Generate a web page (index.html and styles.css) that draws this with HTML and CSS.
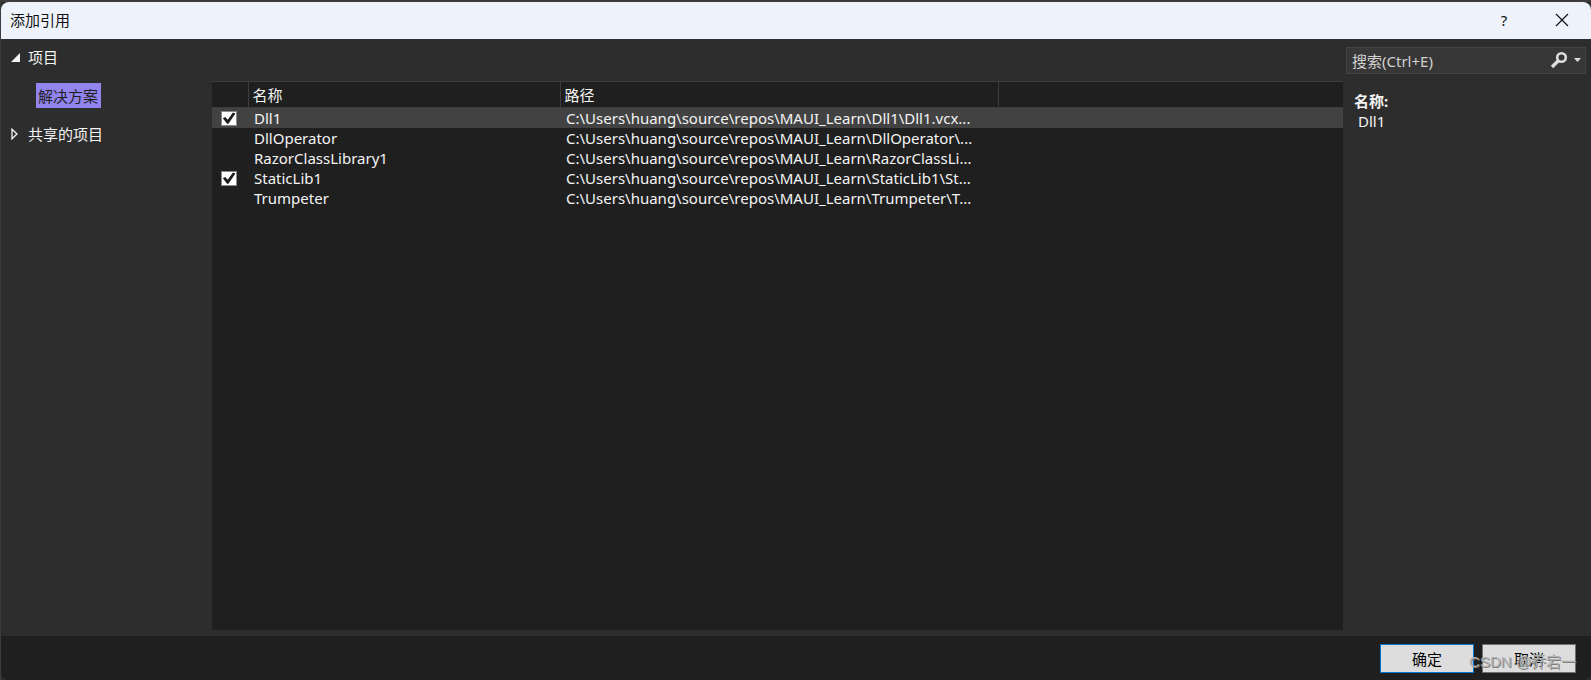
FILE: index.html
```html
<!DOCTYPE html>
<html lang="zh-CN">
<head>
<meta charset="utf-8">
<title>添加引用</title>
<link rel="stylesheet" href="styles.css">
</head>
<body>
<div class="dialog" role="dialog" aria-labelledby="dialog-title">
  <header class="titlebar">
    <h1 class="title" id="dialog-title">添加引用</h1>
    <button class="caption-button" type="button">?</button>
    <button class="caption-button" type="button" aria-label="关闭">
      <svg width="14" height="14" viewBox="0 0 14 14"><path d="M1 1l12 12M13 1L1 13" stroke="#111" stroke-width="1.2" fill="none"/></svg>
    </button>
  </header>
  <main class="content">
    <nav class="sidebar">
      <button class="group" type="button" aria-expanded="true">
        <svg class="arrow" width="10" height="10" viewBox="0 0 10 10"><path d="M10 1v9H1z" fill="#f4f4f4"/></svg>项目
      </button>
      <button class="entry" type="button">解决方案</button>
      <button class="group" type="button" aria-expanded="false">
        <svg class="arrow" width="10" height="12" viewBox="0 0 10 12"><path d="M2 1.200v9.600L7 6z" stroke="#f4f4f4" stroke-width="1.3" fill="none"/></svg>共享的项目
      </button>
    </nav>
    <section class="list">
      <table class="refs">
        <colgroup><col class="col-check"><col class="col-name"><col class="col-path"><col></colgroup>
        <thead>
          <tr><th></th><th>名称</th><th>路径</th><th></th></tr>
        </thead>
        <tbody>
          <tr class="selected"><td><input class="check" type="checkbox" aria-label="Dll1" checked></td><td>Dll1</td><td>C:\Users\huang\source\repos\MAUI_Learn\Dll1\Dll1.vcx...</td><td></td></tr>
          <tr><td></td><td>DllOperator</td><td>C:\Users\huang\source\repos\MAUI_Learn\DllOperator\...</td><td></td></tr>
          <tr><td></td><td>RazorClassLibrary1</td><td>C:\Users\huang\source\repos\MAUI_Learn\RazorClassLi...</td><td></td></tr>
          <tr><td><input class="check" type="checkbox" aria-label="StaticLib1" checked></td><td>StaticLib1</td><td>C:\Users\huang\source\repos\MAUI_Learn\StaticLib1\St...</td><td></td></tr>
          <tr><td></td><td>Trumpeter</td><td>C:\Users\huang\source\repos\MAUI_Learn\Trumpeter\T...</td><td></td></tr>
        </tbody>
      </table>
    </section>
    <aside class="details">
      <div class="search">
        <input class="search-input" type="text" placeholder="搜索(Ctrl+E)" aria-label="搜索">
        <button class="search-button" type="button" aria-label="搜索">
          <svg width="32" height="18" viewBox="0 0 32 18"><circle cx="11.5" cy="6.5" r="4.3" stroke="#dcdcdc" stroke-width="2.6" fill="none"/><path d="M8.300 9.700L2 16" stroke="#dcdcdc" stroke-width="3.4"/><path d="M24 7h7l-3.500 4z" fill="#dcdcdc"/></svg>
        </button>
      </div>
      <dl class="info"><dt>名称:</dt><dd>Dll1</dd></dl>
    </aside>
  </main>
  <footer class="footer">
    <button class="action primary" type="button">确定</button>
    <button class="action" type="button">取消</button>
    <span class="watermark">CSDN @乔宕一</span>
  </footer>
</div>
</body>
</html>
```

FILE: styles.css
```css
* { box-sizing: border-box; }
body {
  margin: 0;
  background: #2b2b2b;
  color: #f4f4f4;
  font: 15px/20px "Noto Sans", "Noto Sans CJK SC", sans-serif;
}
button, input { font: inherit; color: inherit; margin: 0; }
button { border: 0; padding: 0; background: none; }
.dialog {
  display: flex;
  flex-direction: column;
  min-height: 100vh;
  border: solid #3c3c3c;
  border-width: 2px 0 0 1px;
}
.titlebar {
  display: flex;
  align-items: center;
  height: 37px;
  padding-bottom: 2px;
  background: #eef3fb;
  color: #111;
  border-radius: 8px 8px 0 0;
}
.title { flex: 1; margin: 0; padding-left: 9px; font-size: 15px; font-weight: 400; }
.caption-button { width: 58px; height: 35px; display: grid; place-items: center; }
.content {
  flex: 1;
  display: grid;
  grid-template-columns: 211px 1fr 248px;
  background: #2d2d2d;
}
.sidebar { display: flex; flex-direction: column; align-items: flex-start; padding: 7px 0 0 9px; }
.group { display: flex; align-items: center; gap: 8px; height: 22px; }
.entry {
  height: 25px;
  margin: 15px 0 15px 26px;
  padding: 0 3px 0 2px;
  background: #9184ee;
  color: #1f1f1f;
}
.list { margin: 42px 0 6px; background: #1f1f1f; }
.refs { width: 100%; table-layout: fixed; border-collapse: collapse; }
.col-check { width: 36px; }
.col-name { width: 312px; }
.col-path { width: 438px; }
.refs th {
  height: 26px;
  padding: 0 5px 0 4px;
  border: 1px solid #3d3d3d;
  border-left: 0;
  text-align: left;
  font-weight: 400;
}
.refs th:last-child { border-right: 0; }
.refs td { height: 20px; padding: 0 6px; white-space: nowrap; }
.refs td:first-child { padding: 0 0 0 9px; }
.selected { background: #424242; }
.check {
  appearance: none;
  display: block;
  width: 16px;
  height: 15px;
  border: 1px solid #8a8a8a;
  background: #fff;
}
.check:checked::before {
  content: "";
  display: block;
  height: 100%;
  background: #1e1e1e;
  clip-path: polygon(6% 52%, 23% 42%, 41% 64%, 78% 8%, 96% 16%, 46% 94%, 36% 94%);
}
.details { padding: 8px 5px 0 3px; }
.search { display: flex; height: 27px; border: 1px solid #434343; background: #373737; }
.search-input { flex: 1; min-width: 0; border: 0; padding: 0 5px; background: none; outline: 0; }
.search-input::placeholder { color: #d2d2d2; opacity: 1; }
.search-button { width: 38px; padding-top: 2px; }
.info { margin: 17px 0 0 8px; }
.info dt { font-weight: 700; }
.info dd { margin: 0 0 0 4px; }
.footer {
  position: relative;
  display: flex;
  justify-content: flex-end;
  gap: 8px;
  height: 44px;
  padding: 8px 15px 7px 0;
  background: #1f1f1f;
  border-radius: 0 0 8px 8px;
}
.action { width: 94px; border: 1px solid #707070; background: #ddd; color: #000; }
.primary { border-color: #0078d7; }
.watermark {
  position: absolute;
  right: 15px;
  bottom: 8px;
  color: #b4b4b4;
  font-family: "Liberation Sans", "Noto Sans CJK SC", sans-serif;
  text-shadow: 1px 1px 0 #808080;
  pointer-events: none;
}
```
